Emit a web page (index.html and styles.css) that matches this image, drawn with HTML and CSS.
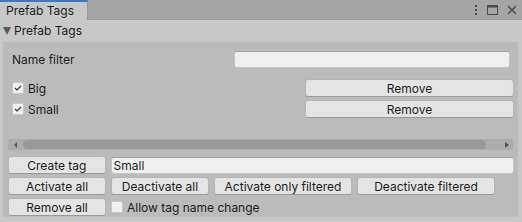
FILE: index.html
```html
<!DOCTYPE html>
<html>
<head>
  <title>Prefab Tags</title>
  <link rel="stylesheet" href="styles.css">
</head>
<body>
  <!-- Window tab bar -->
  <div class="tab-bar">
    <div class="tab">Prefab Tags</div>
    <div class="tab-icons">
      <svg width="4" height="10" viewBox="0 0 4 10"><rect x="1" y="0" width="2" height="2" fill="#4a4a4a"/><rect x="1" y="4" width="2" height="2" fill="#4a4a4a"/><rect x="1" y="8" width="2" height="2" fill="#4a4a4a"/></svg>
      <svg width="11" height="10" viewBox="0 0 11 10"><rect x="0.5" y="0.5" width="10" height="9" fill="none" stroke="#4a4a4a"/><rect x="0.5" y="0.5" width="10" height="2" fill="#4a4a4a"/></svg>
      <svg width="10" height="10" viewBox="0 0 10 10"><path d="M1 1 L9 9 M9 1 L1 9" stroke="#4a4a4a" stroke-width="1.4"/></svg>
    </div>
  </div>

  <div class="foldout">
    <span class="arrow"></span>
    <span>Prefab Tags</span>
  </div>

  <div class="box">
    <div class="filter-row">
      <span class="label">Name filter</span>
      <div class="field filter-field"></div>
    </div>

    <div class="tag-row">
      <label class="toggle"><span class="check"><svg width="10" height="10" viewBox="0 0 10 10"><path d="M2 5 L4 7 L8 3" fill="none" stroke="#333" stroke-width="1.1"/></svg></span>Big</label>
      <button class="btn remove-btn">Remove</button>
    </div>
    <div class="tag-row">
      <label class="toggle"><span class="check"><svg width="10" height="10" viewBox="0 0 10 10"><path d="M2 5 L4 7 L8 3" fill="none" stroke="#333" stroke-width="1.1"/></svg></span>Small</label>
      <button class="btn remove-btn">Remove</button>
    </div>

    <div class="scrollbar">
      <span class="arrow-left"></span>
      <div class="thumb"></div>
      <span class="arrow-right"></span>
    </div>

    <div class="action-row">
      <button class="btn wide">Create tag</button>
      <div class="field name-field">Small</div>
    </div>
    <div class="action-row">
      <button class="btn wide">Activate all</button>
      <button class="btn wide">Deactivate all</button>
      <button class="btn wider">Activate only filtered</button>
      <button class="btn wider">Deactivate filtered</button>
    </div>
    <div class="action-row">
      <button class="btn wide">Remove all</button>
      <label class="toggle"><span class="check"></span>Allow tag name change</label>
    </div>
  </div>
</body>
</html>
```

FILE: styles.css
```css
body {
  margin: 0;
  background-color: #c8c8c8;
  font-family: 'Inter', 'Noto Sans', sans-serif;
  font-size: 12px;
  color: #1c1c1c;
  width: 522px;
  height: 222px;
  overflow: hidden;
}

.tab-bar {
  height: 20px;
  background-color: #a5a5a5;
  display: flex;
  align-items: stretch;
  box-shadow: inset 0 -1px 0 #999;
}

.tab {
  width: 88px;
  padding-left: 6px;
  background-color: #c8c8c8;
  border-top: 2px solid #3a79bb;
  border-right: 1px solid #999;
  line-height: 18px;
  box-sizing: border-box;
}

.tab-icons {
  margin-left: auto;
  display: flex;
  align-items: center;
  gap: 9px;
  padding-right: 5px;
  padding-bottom: 1px;
}

.foldout {
  height: 21px;
  display: flex;
  align-items: center;
  gap: 3px;
  padding-left: 3px;
}

.arrow {
  width: 0;
  height: 0;
  border-left: 4px solid transparent;
  border-right: 4px solid transparent;
  border-top: 8px solid #5a5a5a;
}

.box {
  margin: 1px 4px 0 3px;
  height: 175px;
  background-color: #bbbbbb;
  padding: 9px 4px 0 5px;
  box-sizing: border-box;
  display: flex;
  flex-direction: column;
}

.filter-row {
  display: flex;
  align-items: center;
  height: 17px;
  padding-left: 4px;
}

.label {
  width: 222px;
}

.field {
  background-color: #f0f0f0;
  border: 1px solid #c4c4c4;
  border-top-color: #a0a0a0;
  border-radius: 3px;
  box-sizing: border-box;
  height: 17px;
  line-height: 15px;
  padding-left: 2px;
}

.filter-field {
  width: 276px;
}

.tag-row {
  display: flex;
  align-items: center;
  height: 18px;
  padding-left: 4px;
  margin-top: 3px;
}

.tag-row:nth-of-type(2) {
  margin-top: 11px;
}

.toggle {
  display: flex;
  align-items: center;
  gap: 4px;
}

.check {
  width: 12px;
  height: 12px;
  box-sizing: border-box;
  background-color: #f0f0f0;
  border: 1px solid #c8c8c8;
  border-radius: 2px;
  display: flex;
  align-items: center;
  justify-content: center;
}

.btn {
  font-family: inherit;
  font-size: 12px;
  color: #1c1c1c;
  background-color: #e4e4e4;
  border: 1px solid #b4b4b4;
  border-bottom-color: #999;
  border-radius: 3px;
  height: 18px;
  padding: 0;
  box-sizing: border-box;
}

.remove-btn {
  margin-left: auto;
  width: 209px;
}

.scrollbar {
  margin-top: 21px;
  height: 11px;
  background-color: #acacac;
  display: flex;
  align-items: center;
  padding: 0 4px 0 6px;
  width: 505px;
  box-sizing: border-box;
}

.arrow-left, .arrow-right {
  width: 0;
  height: 0;
  border-top: 3px solid transparent;
  border-bottom: 3px solid transparent;
}

.arrow-left {
  border-right: 3px solid #555;
}

.arrow-right {
  border-left: 4px solid #555;
}

.thumb {
  height: 9px;
  background-color: #999;
  border-radius: 5px;
  margin-left: 6px;
  width: 463px;
  margin-right: auto;
}

.action-row {
  display: flex;
  align-items: center;
  gap: 5px;
  margin-top: 3px;
  height: 18px;
}

.scrollbar + .action-row {
  margin-top: 6px;
}

.wide {
  width: 98px;
}

.wider {
  width: 138px;
}

.name-field {
  width: 405px;
}
```
